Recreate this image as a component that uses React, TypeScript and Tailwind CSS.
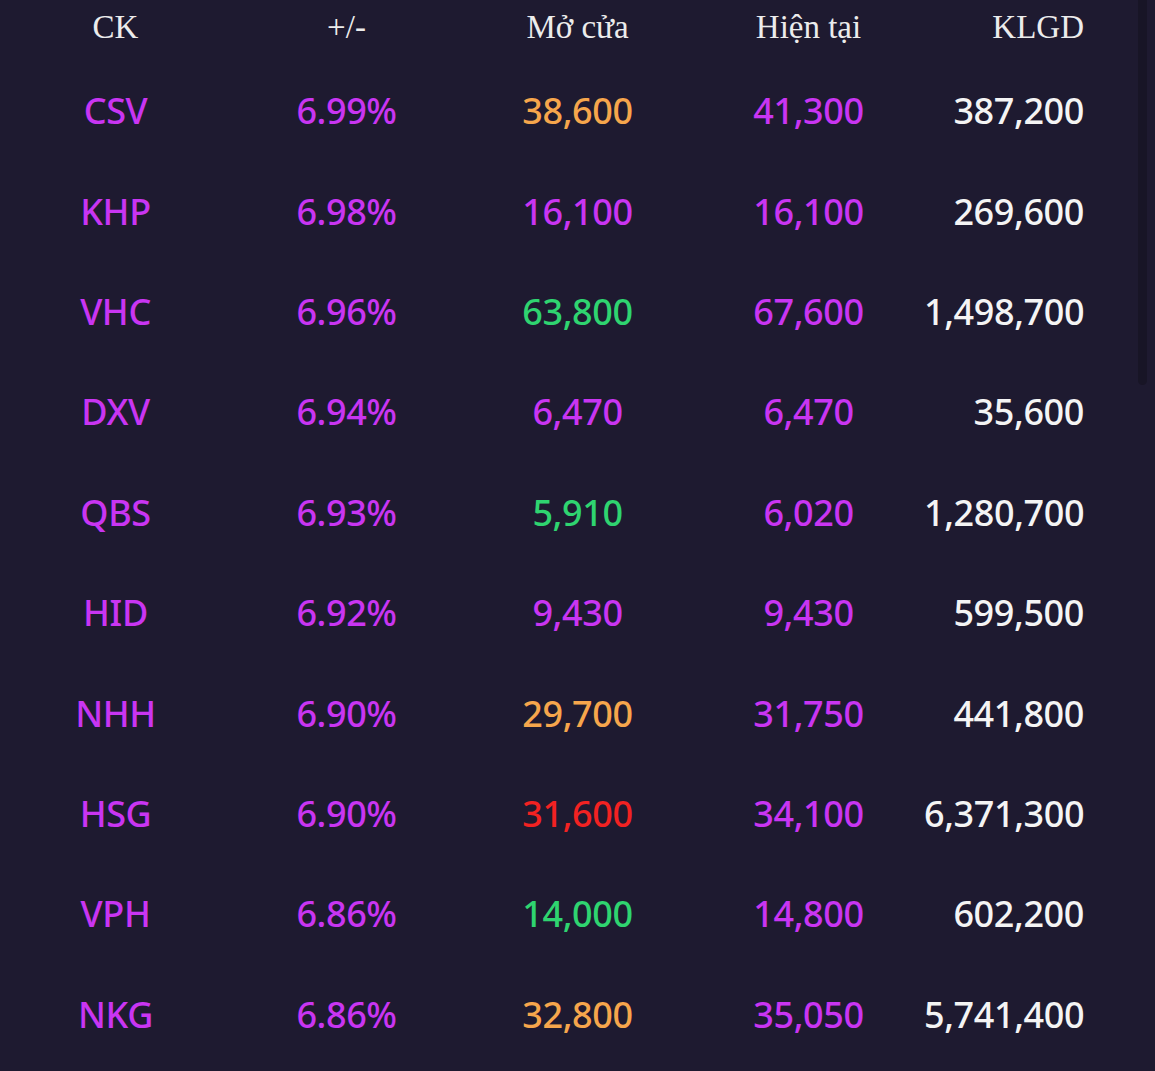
const rows = [
  { ck: "CSV", pct: "6.99%", open: "38,600", oc: "orange", cur: "41,300", vol: "387,200" },
  { ck: "KHP", pct: "6.98%", open: "16,100", oc: "purple", cur: "16,100", vol: "269,600" },
  { ck: "VHC", pct: "6.96%", open: "63,800", oc: "green", cur: "67,600", vol: "1,498,700" },
  { ck: "DXV", pct: "6.94%", open: "6,470", oc: "purple", cur: "6,470", vol: "35,600" },
  { ck: "QBS", pct: "6.93%", open: "5,910", oc: "green", cur: "6,020", vol: "1,280,700" },
  { ck: "HID", pct: "6.92%", open: "9,430", oc: "purple", cur: "9,430", vol: "599,500" },
  { ck: "NHH", pct: "6.90%", open: "29,700", oc: "orange", cur: "31,750", vol: "441,800" },
  { ck: "HSG", pct: "6.90%", open: "31,600", oc: "red", cur: "34,100", vol: "6,371,300" },
  { ck: "VPH", pct: "6.86%", open: "14,000", oc: "green", cur: "14,800", vol: "602,200" },
  { ck: "NKG", pct: "6.86%", open: "32,800", oc: "orange", cur: "35,050", vol: "5,741,400" },
];

const openColor: Record<string, string> = {
  orange: "text-[#f6a64c]",
  purple: "text-[#c935f2]",
  green: "text-[#2fd470]",
  red: "text-[#f22222]",
};

export default function App() {
  return (
    <div className="relative h-[1071px] w-[1155px] overflow-hidden bg-[#1e1a30]">
      {/* header */}
      <div className="grid h-[61px] grid-cols-5 pt-[8px] text-[33px] leading-[38px] text-[#ececec] [font-family:'Liberation_Serif',serif]">
        <div className="text-center">CK</div>
        <div className="text-center">+/-</div>
        <div className="text-center">Mở cửa</div>
        <div className="text-center">Hiện tại</div>
        <div className="pr-[71px] text-right">KLGD</div>
      </div>

      {/* rows */}
      {rows.map((r) => (
        <div
          key={r.ck}
          className="grid h-[100.4px] grid-cols-5 items-center text-[36px] font-medium leading-[44px] tracking-[-0.4px] [font-family:'Noto_Sans',sans-serif]"
        >
          <div className="text-center text-[#c935f2]">{r.ck}</div>
          <div className="text-center text-[#c935f2]">{r.pct}</div>
          <div className={`text-center ${openColor[r.oc]}`}>{r.open}</div>
          <div className="text-center text-[#c935f2]">{r.cur}</div>
          <div className="pr-[71px] text-right text-[#f4f4f4]">{r.vol}</div>
        </div>
      ))}

      {/* scrollbar thumb */}
      <div className="absolute right-[8px] top-0 h-[385px] w-[9px] rounded-b-full bg-[#181526]" />
    </div>
  );
}
